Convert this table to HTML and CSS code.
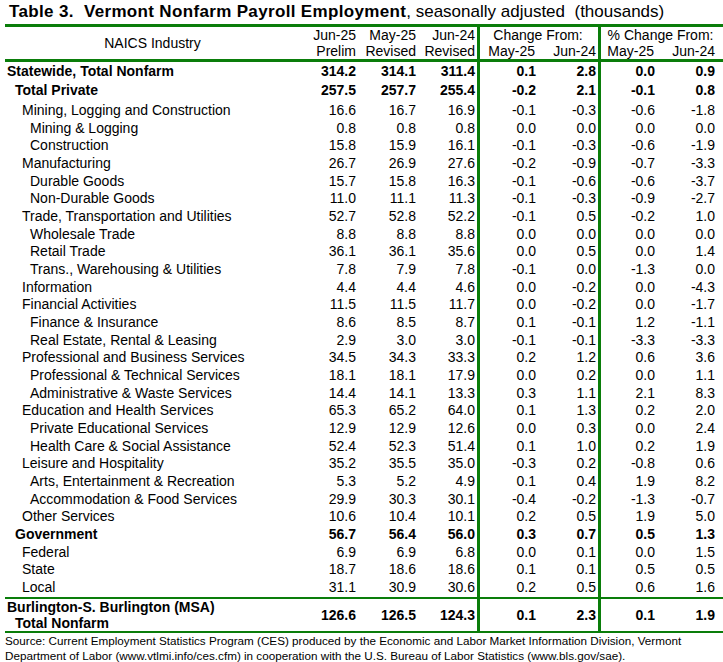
FILE: index.html
```html
<!DOCTYPE html>
<html>
<head>
<meta charset="utf-8">
<link rel="stylesheet" href="styles.css">
</head>
<body>
<div class="title"><b class="title-main">Table 3.&nbsp; Vermont Nonfarm Payroll Employment</b>, seasonally adjusted&nbsp; (thousands)</div>
<table class="tbl">
<colgroup>
<col class="c-label"><col class="c-n1"><col class="c-n2"><col class="c-n3"><col class="c-n4"><col class="c-n5"><col class="c-n6"><col class="c-n7">
</colgroup>
<thead>
<tr class="h1">
<th rowspan="2" class="naics">NAICS Industry</th>
<th class="n">Jun-25</th><th class="n">May-25</th><th class="n vb">Jun-24</th>
<th colspan="2" class="grp vb">Change From:</th>
<th colspan="2" class="grp">% Change From:</th>
</tr>
<tr class="h2">
<th class="n">Prelim</th><th class="n">Revised</th><th class="n vb">Revised</th>
<th class="n">May-25</th><th class="n vb">Jun-24</th>
<th class="n">May-25</th><th class="n last">Jun-24</th>
</tr>
</thead>
<tbody>
<tr class="r bold first"><td class="l0">Statewide, Total Nonfarm</td><td>314.2</td><td>314.1</td><td class="vb">311.4</td><td>0.1</td><td class="vb">2.8</td><td>0.0</td><td class="last">0.9</td></tr>
<tr class="r bold tp"><td class="lp">Total Private</td><td>257.5</td><td>257.7</td><td class="vb">255.4</td><td>-0.2</td><td class="vb">2.1</td><td>-0.1</td><td class="last">0.8</td></tr>
<tr class="r"><td class="l1">Mining, Logging and Construction</td><td>16.6</td><td>16.7</td><td class="vb">16.9</td><td>-0.1</td><td class="vb">-0.3</td><td>-0.6</td><td class="last">-1.8</td></tr>
<tr class="r"><td class="l2">Mining &amp; Logging</td><td>0.8</td><td>0.8</td><td class="vb">0.8</td><td>0.0</td><td class="vb">0.0</td><td>0.0</td><td class="last">0.0</td></tr>
<tr class="r"><td class="l2">Construction</td><td>15.8</td><td>15.9</td><td class="vb">16.1</td><td>-0.1</td><td class="vb">-0.3</td><td>-0.6</td><td class="last">-1.9</td></tr>
<tr class="r"><td class="l1">Manufacturing</td><td>26.7</td><td>26.9</td><td class="vb">27.6</td><td>-0.2</td><td class="vb">-0.9</td><td>-0.7</td><td class="last">-3.3</td></tr>
<tr class="r"><td class="l2">Durable Goods</td><td>15.7</td><td>15.8</td><td class="vb">16.3</td><td>-0.1</td><td class="vb">-0.6</td><td>-0.6</td><td class="last">-3.7</td></tr>
<tr class="r"><td class="l2">Non-Durable Goods</td><td>11.0</td><td>11.1</td><td class="vb">11.3</td><td>-0.1</td><td class="vb">-0.3</td><td>-0.9</td><td class="last">-2.7</td></tr>
<tr class="r"><td class="l1">Trade, Transportation and Utilities</td><td>52.7</td><td>52.8</td><td class="vb">52.2</td><td>-0.1</td><td class="vb">0.5</td><td>-0.2</td><td class="last">1.0</td></tr>
<tr class="r"><td class="l2">Wholesale Trade</td><td>8.8</td><td>8.8</td><td class="vb">8.8</td><td>0.0</td><td class="vb">0.0</td><td>0.0</td><td class="last">0.0</td></tr>
<tr class="r"><td class="l2">Retail Trade</td><td>36.1</td><td>36.1</td><td class="vb">35.6</td><td>0.0</td><td class="vb">0.5</td><td>0.0</td><td class="last">1.4</td></tr>
<tr class="r"><td class="l2">Trans., Warehousing &amp; Utilities</td><td>7.8</td><td>7.9</td><td class="vb">7.8</td><td>-0.1</td><td class="vb">0.0</td><td>-1.3</td><td class="last">0.0</td></tr>
<tr class="r"><td class="l1">Information</td><td>4.4</td><td>4.4</td><td class="vb">4.6</td><td>0.0</td><td class="vb">-0.2</td><td>0.0</td><td class="last">-4.3</td></tr>
<tr class="r"><td class="l1">Financial Activities</td><td>11.5</td><td>11.5</td><td class="vb">11.7</td><td>0.0</td><td class="vb">-0.2</td><td>0.0</td><td class="last">-1.7</td></tr>
<tr class="r"><td class="l2">Finance &amp; Insurance</td><td>8.6</td><td>8.5</td><td class="vb">8.7</td><td>0.1</td><td class="vb">-0.1</td><td>1.2</td><td class="last">-1.1</td></tr>
<tr class="r"><td class="l2">Real Estate, Rental &amp; Leasing</td><td>2.9</td><td>3.0</td><td class="vb">3.0</td><td>-0.1</td><td class="vb">-0.1</td><td>-3.3</td><td class="last">-3.3</td></tr>
<tr class="r"><td class="l1">Professional and Business Services</td><td>34.5</td><td>34.3</td><td class="vb">33.3</td><td>0.2</td><td class="vb">1.2</td><td>0.6</td><td class="last">3.6</td></tr>
<tr class="r"><td class="l2">Professional &amp; Technical Services</td><td>18.1</td><td>18.1</td><td class="vb">17.9</td><td>0.0</td><td class="vb">0.2</td><td>0.0</td><td class="last">1.1</td></tr>
<tr class="r"><td class="l2">Administrative &amp; Waste Services</td><td>14.4</td><td>14.1</td><td class="vb">13.3</td><td>0.3</td><td class="vb">1.1</td><td>2.1</td><td class="last">8.3</td></tr>
<tr class="r"><td class="l1">Education and Health Services</td><td>65.3</td><td>65.2</td><td class="vb">64.0</td><td>0.1</td><td class="vb">1.3</td><td>0.2</td><td class="last">2.0</td></tr>
<tr class="r"><td class="l2">Private Educational Services</td><td>12.9</td><td>12.9</td><td class="vb">12.6</td><td>0.0</td><td class="vb">0.3</td><td>0.0</td><td class="last">2.4</td></tr>
<tr class="r"><td class="l2">Health Care &amp; Social Assistance</td><td>52.4</td><td>52.3</td><td class="vb">51.4</td><td>0.1</td><td class="vb">1.0</td><td>0.2</td><td class="last">1.9</td></tr>
<tr class="r"><td class="l1">Leisure and Hospitality</td><td>35.2</td><td>35.5</td><td class="vb">35.0</td><td>-0.3</td><td class="vb">0.2</td><td>-0.8</td><td class="last">0.6</td></tr>
<tr class="r"><td class="l2">Arts, Entertainment &amp; Recreation</td><td>5.3</td><td>5.2</td><td class="vb">4.9</td><td>0.1</td><td class="vb">0.4</td><td>1.9</td><td class="last">8.2</td></tr>
<tr class="r"><td class="l2">Accommodation &amp; Food Services</td><td>29.9</td><td>30.3</td><td class="vb">30.1</td><td>-0.4</td><td class="vb">-0.2</td><td>-1.3</td><td class="last">-0.7</td></tr>
<tr class="r"><td class="l1">Other Services</td><td>10.6</td><td>10.4</td><td class="vb">10.1</td><td>0.2</td><td class="vb">0.5</td><td>1.9</td><td class="last">5.0</td></tr>
<tr class="r bold"><td class="lp">Government</td><td>56.7</td><td>56.4</td><td class="vb">56.0</td><td>0.3</td><td class="vb">0.7</td><td>0.5</td><td class="last">1.3</td></tr>
<tr class="r"><td class="l1">Federal</td><td>6.9</td><td>6.9</td><td class="vb">6.8</td><td>0.0</td><td class="vb">0.1</td><td>0.0</td><td class="last">1.5</td></tr>
<tr class="r"><td class="l1">State</td><td>18.7</td><td>18.6</td><td class="vb">18.6</td><td>0.1</td><td class="vb">0.1</td><td>0.5</td><td class="last">0.5</td></tr>
<tr class="r ruled"><td class="l1">Local</td><td>31.1</td><td>30.9</td><td class="vb">30.6</td><td>0.2</td><td class="vb">0.5</td><td>0.6</td><td class="last">1.6</td></tr>
<tr class="msa bold ruled"><td class="l0"><div>Burlington-S. Burlington (MSA)</div><div class="sub">Total Nonfarm</div></td><td>126.6</td><td>126.5</td><td class="vb">124.3</td><td>0.1</td><td class="vb">2.3</td><td>0.1</td><td class="last">1.9</td></tr>
</tbody>
</table>
<p class="source">Source: Current Employment Statistics Program (CES) produced by the Economic and Labor Market Information Division, Vermont<br>Department of Labor (www.vtlmi.info/ces.cfm) in cooperation with the U.S. Bureau of Labor Statistics (www.bls.gov/sae).</p>
</body>
</html>
```

FILE: styles.css
```css
html, body {
  margin: 0;
  padding: 0;
  background: #ffffff;
  color: #000000;
  font-family: "Liberation Sans", Arial, sans-serif;
}

.title {
  height: 24px;
  line-height: 24px;
  font-size: 17px;
  padding-left: 9px;
  white-space: nowrap;
}

.title-main {
  letter-spacing: 0.34px;
}

.tbl {
  margin-left: 5px;
  width: 718px;
  border-collapse: separate;
  border-spacing: 0;
  border-top: 3px solid #0a7d0a;
  table-layout: fixed;
  font-size: 14px;
}

.c-label { width: 295px; }
.c-n1 { width: 59px; }
.c-n2 { width: 60px; }
.c-n3 { width: 61px; }
.c-n4 { width: 58px; }
.c-n5 { width: 63px; }
.c-n6 { width: 56px; }
.c-n7 { width: 66px; }

.tbl th {
  font-weight: normal;
  padding: 0 3px 0 0;
  height: 16px;
  line-height: 16px;
  white-space: nowrap;
}

.tbl th.n { text-align: right; }
.tbl th.grp { text-align: center; }
.tbl th.naics {
  text-align: center;
  border-bottom: 3px solid #0a7d0a;
  padding: 0;
}
.h2 th { border-bottom: 3px solid #0a7d0a; }
.tbl th.vb { padding-right: 2px; }

.vb { border-right: 3px solid #0a7d0a; }

.tbl td {
  padding: 0 2px 0 0;
  text-align: right;
  white-space: nowrap;
  line-height: 17.67px;
  height: 17.67px;
}

.tbl td:nth-child(2), .tbl td:nth-child(3) { padding-right: 3px; }
.tbl td.last, .tbl th.last { padding-right: 8px; }

.tbl td.l0, .tbl td.lp, .tbl td.l1, .tbl td.l2 { text-align: left; }
.tbl td.l0 { padding-left: 2px; }
.tbl td.lp { padding-left: 10px; }
.tbl td.l1 { padding-left: 17px; }
.tbl td.l2 { padding-left: 25px; }

.bold td { font-weight: bold; }

.r.first td { height: 19px; line-height: 19px; }
.r.tp td { height: 21px; line-height: 18px; vertical-align: top; }

.ruled td { border-bottom: 2px solid #0a7d0a; }

.msa td { height: 31px; line-height: 16px; vertical-align: middle; }
.msa .sub { padding-left: 8px; }

.source {
  margin: 0;
  padding: 0 0 0 5px;
  font-size: 11.7px;
  line-height: 15px;
  white-space: nowrap;
}
```
